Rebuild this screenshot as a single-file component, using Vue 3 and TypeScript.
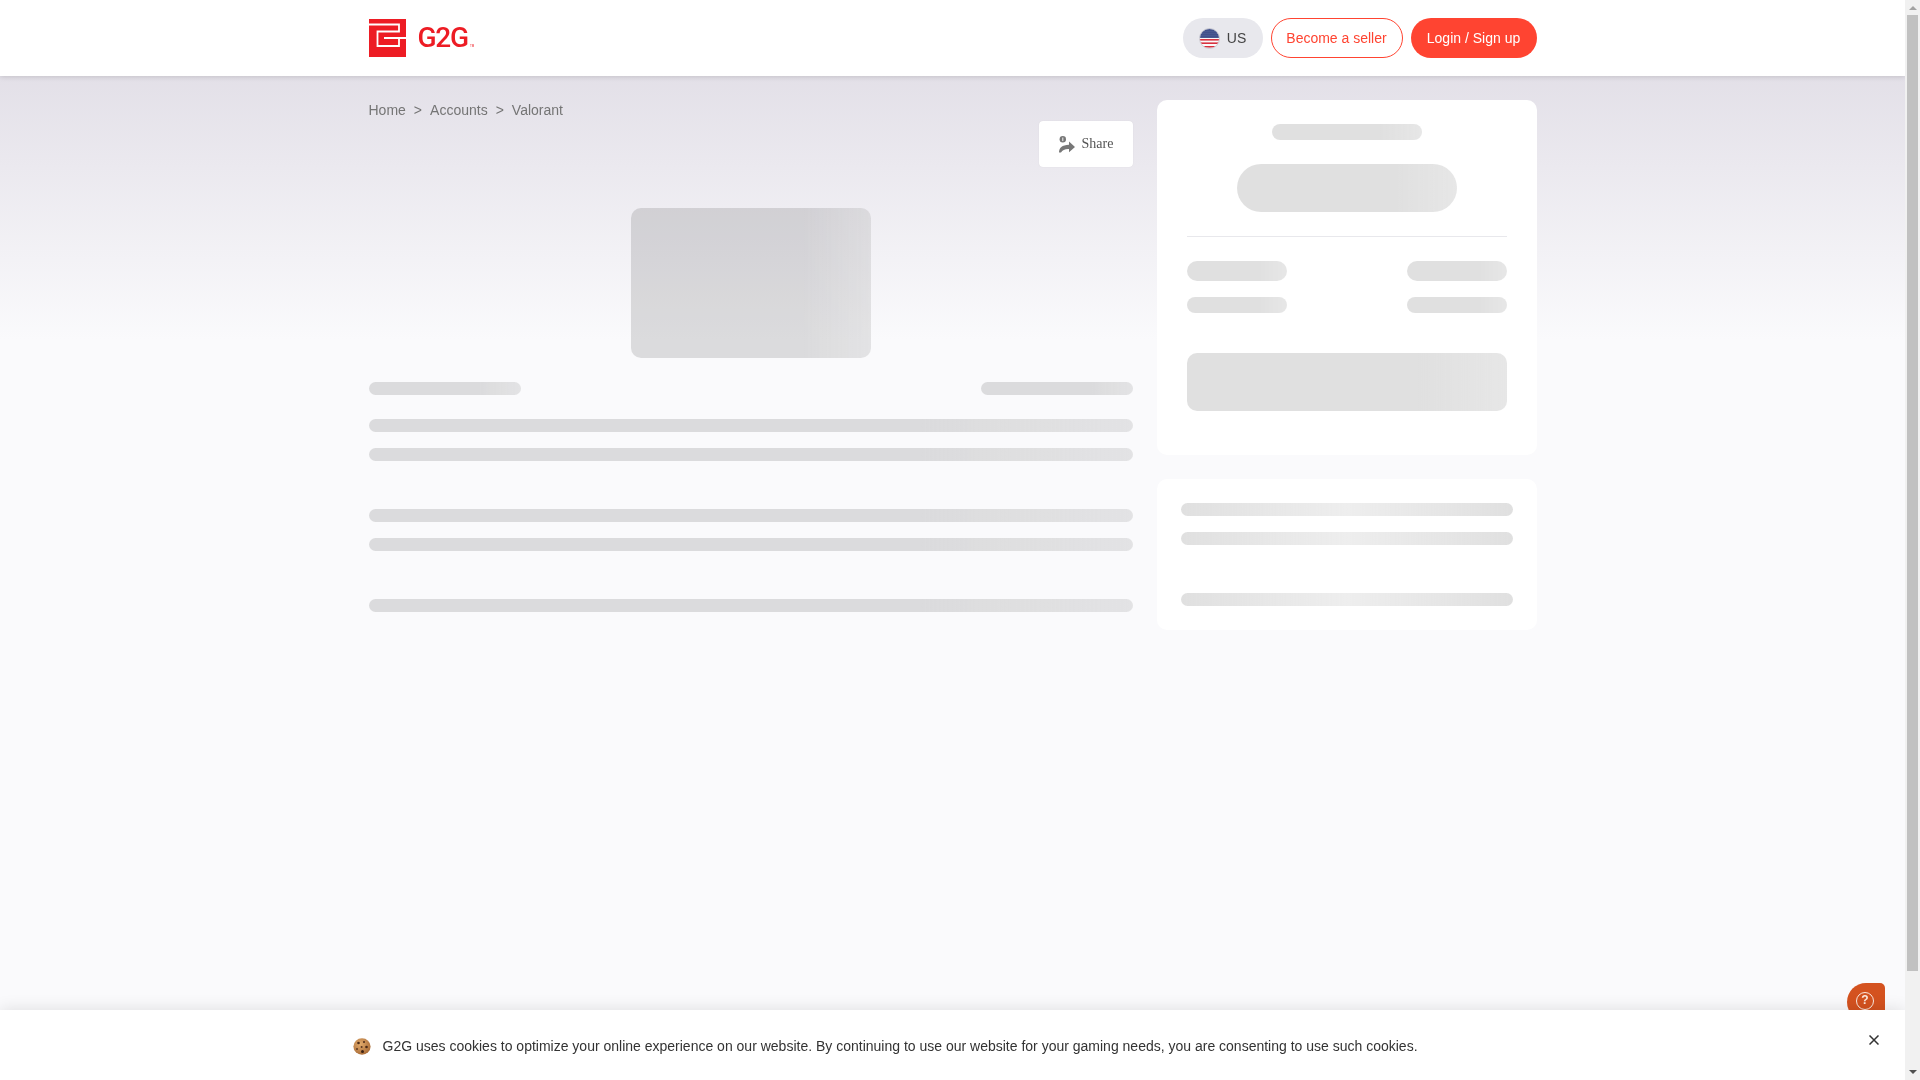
<template>
  <div class="screen">
    <div class="page">
      <header class="topbar">
        <div class="wrap topbar-row">
          <a class="logo" aria-label="G2G">
            <svg width="37" height="38" viewBox="0 0 37 38">
              <rect width="37" height="38" fill="#ed1c24" />
              <path d="M0 5.5H30V12.5H8.5V27H30V19M15 19H37" fill="none" stroke="#fff" stroke-width="1.8" />
            </svg>
            <span class="wordmark">G2G</span>
            <span class="wordmark-tm">TM</span>
          </a>
          <div class="actions">
            <button type="button" class="pill lang">
              <svg width="21" height="21" viewBox="0 0 21 21">
                <defs>
                  <clipPath id="flag-clip"><circle cx="10.5" cy="10.5" r="10" /></clipPath>
                  <pattern id="flag-stars" width="2" height="2" patternUnits="userSpaceOnUse">
                    <rect width="2" height="2" fill="#2b3c7c" />
                    <circle cx="1" cy="1" r="0.5" fill="#b9c0dc" />
                  </pattern>
                </defs>
                <g clip-path="url(#flag-clip)">
                  <rect width="21" height="21" fill="#fafafa" />
                  <rect y="11" width="21" height="1.6" fill="#d8323f" />
                  <rect y="14.4" width="21" height="1.6" fill="#d8323f" />
                  <rect y="18" width="21" height="1.6" fill="#d8323f" />
                  <rect width="21" height="10" fill="url(#flag-stars)" />
                </g>
                <circle cx="10.5" cy="10.5" r="10" fill="none" stroke="#cdcdd4" />
              </svg>
              <span>US</span>
            </button>
            <button type="button" class="pill seller">Become a seller</button>
            <button type="button" class="pill login">Login / Sign up</button>
          </div>
        </div>
      </header>

      <main class="wrap content">
        <section class="left">
          <nav class="crumbs">
            <template v-for="(c, i) in crumbs" :key="c">
              <span v-if="i > 0">&gt;</span>
              <a>{{ c }}</a>
            </template>
          </nav>
          <div class="share-row">
            <button type="button" class="share">
              <svg width="16" height="17" viewBox="0 0 16 17">
                <circle cx="3.8" cy="3.3" r="3.2" fill="#777" />
                <path d="M3.8 1.5V5.1" stroke="#fff" stroke-width="0.9" />
                <path d="M0 16.6C0 12 3 9 10 8.8V5.4L16 11 10 16.2V13C6 12.8 3.4 14 2 16.6Z" fill="#777" />
              </svg>
              <span>Share</span>
            </button>
          </div>
          <div class="sk tail sk-image"></div>
          <div class="split-row">
            <div class="sk tail sk-line short"></div>
            <div class="sk tail sk-line short"></div>
          </div>
          <div class="sk tail sk-line gap-24"></div>
          <div class="sk tail sk-line gap-16"></div>
          <div class="sk tail sk-line gap-48"></div>
          <div class="sk tail sk-line gap-16"></div>
          <div class="sk tail sk-line gap-48"></div>
        </section>

        <aside class="right">
          <div class="card price-card">
            <div class="sk tail sk-title"></div>
            <div class="sk tail sk-price"></div>
            <div class="rule"></div>
            <div class="stat-row">
              <div class="sk tail stat-lg"></div>
              <div class="sk tail stat-lg"></div>
            </div>
            <div class="stat-row second">
              <div class="sk tail stat-sm"></div>
              <div class="sk tail stat-sm"></div>
            </div>
            <div class="sk tail sk-buy"></div>
          </div>
          <div class="card info-card">
            <div class="sk mid info-line"></div>
            <div class="sk mid info-line gap-16"></div>
            <div class="sk mid info-line gap-48"></div>
          </div>
        </aside>
      </main>

      <button type="button" class="help" aria-label="Help">
        <span class="help-ring">?</span>
      </button>

      <div class="cookie">
        <div class="cookie-row">
          <svg width="18" height="17" viewBox="0 0 18 17">
            <defs>
              <radialGradient id="cookie-fill" cx="40%" cy="35%" r="70%">
                <stop offset="0" stop-color="#e2ab6c" />
                <stop offset="1" stop-color="#a86a35" />
              </radialGradient>
            </defs>
            <ellipse cx="9" cy="8.5" rx="8.6" ry="8.2" fill="url(#cookie-fill)" />
            <circle cx="5.5" cy="5" r="1.3" fill="#4a2a17" />
            <circle cx="11" cy="4" r="1" fill="#4a2a17" />
            <circle cx="13.5" cy="9" r="1.3" fill="#4a2a17" />
            <circle cx="8.6" cy="9" r="1" fill="#5b3720" />
            <circle cx="4" cy="11" r="1" fill="#5b3720" />
            <circle cx="9.5" cy="13.6" r="1.5" fill="#3d2213" />
          </svg>
          <p>G2G uses cookies to optimize your online experience on our website. By continuing to use our website for your gaming needs, you are consenting to use such cookies.</p>
        </div>
        <button type="button" class="cookie-close" aria-label="Close">
          <svg width="10" height="10" viewBox="0 0 10 10">
            <path d="M.5.5 9.5 9.5M9.5.5.5 9.5" stroke="#333" stroke-width="1.5" />
          </svg>
        </button>
      </div>
    </div>

    <div class="scrollbar" aria-hidden="true">
      <span class="arrow up"></span>
      <span class="thumb"></span>
      <span class="arrow down"></span>
    </div>
  </div>
</template>

<script setup lang="ts">
const crumbs: string[] = ['Home', 'Accounts', 'Valorant']
</script>

<style>
html, body { margin: 0; height: 100%; overflow: hidden; }
</style>

<style scoped>
.screen {
  display: flex;
  height: 100vh;
  font-family: "Liberation Sans", Arial, sans-serif;
  font-size: 14px;
  color: #333;
  will-change: transform;
}
.page {
  position: relative;
  flex: 1;
  min-width: 0;
  overflow: hidden;
  background: linear-gradient(180deg, #e3e0e8 76px, #fafafc 340px);
}
.wrap { width: 1168px; margin: 0 auto; }

.topbar {
  height: 76px;
  background: #fff;
  box-shadow: 0 1px 5px rgba(0, 0, 0, .14);
}
.topbar-row {
  display: flex;
  align-items: center;
  justify-content: space-between;
  height: 100%;
}
.logo { display: flex; align-items: center; color: #ed1c24; }
.wordmark {
  margin-left: 12px;
  font-family: Roboto, "Liberation Sans", sans-serif;
  font-size: 28px;
  font-weight: 500;
  letter-spacing: -1.2px;
  line-height: 38px;
}
.wordmark-tm {
  align-self: flex-end;
  margin-left: 2px;
  margin-bottom: 9px;
  font-size: 3px;
  line-height: 4px;
}
.actions { display: flex; gap: 8px; }
.pill {
  display: flex;
  align-items: center;
  justify-content: center;
  height: 40px;
  box-sizing: border-box;
  border: 1px solid transparent;
  border-radius: 20px;
  font: inherit;
  padding: 0;
}
.lang { width: 80px; gap: 7px; background: #e8e8ed; color: #444; }
.seller { width: 132px; background: #fff; border-color: #ff4431; color: #ff4431; }
.login { width: 126px; background: #ff4431; color: #fff; }

.content {
  display: flex;
  gap: 24px;
  padding-top: 24px;
}
.left { width: 764px; }
.right { width: 380px; }

.crumbs {
  display: flex;
  gap: 8px;
  line-height: 20px;
  color: #757575;
}
.share-row { display: flex; justify-content: flex-end; margin-top: 1px; }
.share {
  display: flex;
  align-items: center;
  gap: 7px;
  width: 94px;
  height: 46px;
  box-sizing: border-box;
  padding: 0 0 0 20px;
  background: #fff;
  border: 0;
  border-radius: 4px;
  box-shadow: 0 0 1px rgba(0, 0, 0, .12);
  font-family: "Liberation Serif", "Times New Roman", serif;
  font-size: 14px;
  color: #555;
}

.sk { background-color: rgba(0, 0, 0, .12); }
.tail { background-image: linear-gradient(90deg, transparent 72%, rgba(255, 255, 255, .22)); }
.mid { background-image: linear-gradient(90deg, transparent, rgba(255, 255, 255, .45) 50%, transparent); }

.sk-image { width: 240px; height: 150px; margin: 41px auto 0; border-radius: 10px; }
.split-row { display: flex; justify-content: space-between; margin-top: 24px; }
.sk-line { height: 13px; border-radius: 7px; }
.short { width: 152px; }
.gap-16 { margin-top: 16px; }
.gap-24 { margin-top: 24px; }
.gap-48 { margin-top: 48px; }

.card { background: #fff; border-radius: 10px; }
.price-card {
  box-sizing: border-box;
  height: 355px;
  padding: 24px 30px 0;
}
.sk-title { width: 150px; height: 16px; margin: 0 auto; border-radius: 8px; }
.sk-price { width: 220px; height: 48px; margin: 24px auto 0; border-radius: 24px; }
.rule { height: 1px; margin-top: 24px; background: #e8e8ec; }
.stat-row { display: flex; justify-content: space-between; margin-top: 24px; }
.stat-row.second { margin-top: 16px; }
.stat-lg { width: 100px; height: 20px; border-radius: 10px; }
.stat-sm { width: 100px; height: 16px; border-radius: 8px; }
.sk-buy { height: 58px; margin-top: 40px; border-radius: 10px; }
.info-card { margin-top: 24px; padding: 24px; }
.info-line { height: 13px; border-radius: 7px; }

.help {
  position: absolute;
  right: 20px;
  top: 983px;
  width: 38px;
  height: 38px;
  padding: 0;
  border: 0;
  border-radius: 19px 5px 5px 19px;
  background: #d4521f;
}
.help-ring {
  position: absolute;
  left: 9px;
  top: 9px;
  box-sizing: border-box;
  width: 18px;
  height: 18px;
  border: 1.5px solid #fbe9df;
  border-radius: 50%;
  color: #fbe9df;
  font: 700 12px/15px "Liberation Sans", Arial, sans-serif;
  text-align: center;
}

.cookie {
  position: absolute;
  left: 0;
  right: 0;
  bottom: 0;
  height: 70px;
  background: #fff;
  box-shadow: 0 0 16px rgba(0, 0, 0, .12);
}
.cookie-row {
  display: flex;
  align-items: center;
  gap: 12px;
  width: 1200px;
  height: 72px;
  margin: 0 auto;
}
.cookie-row p { margin: 0; color: #333; }
.cookie-close {
  position: absolute;
  left: 1869px;
  top: 25px;
  display: flex;
  padding: 0;
  border: 0;
  background: none;
}

.scrollbar {
  display: flex;
  flex-direction: column;
  align-items: center;
  flex: none;
  width: 15px;
  height: 100%;
  background: #f1f1f1;
}
.thumb { width: 11px; height: 956px; background: #c1c1c1; }
.arrow { width: 0; height: 0; border-left: 4px solid transparent; border-right: 4px solid transparent; }
.arrow.up { margin: 6px 0 5px; border-bottom: 4px solid #a3a3a3; }
.arrow.down { margin-top: auto; margin-bottom: 6px; border-top: 4px solid #505050; }
</style>
